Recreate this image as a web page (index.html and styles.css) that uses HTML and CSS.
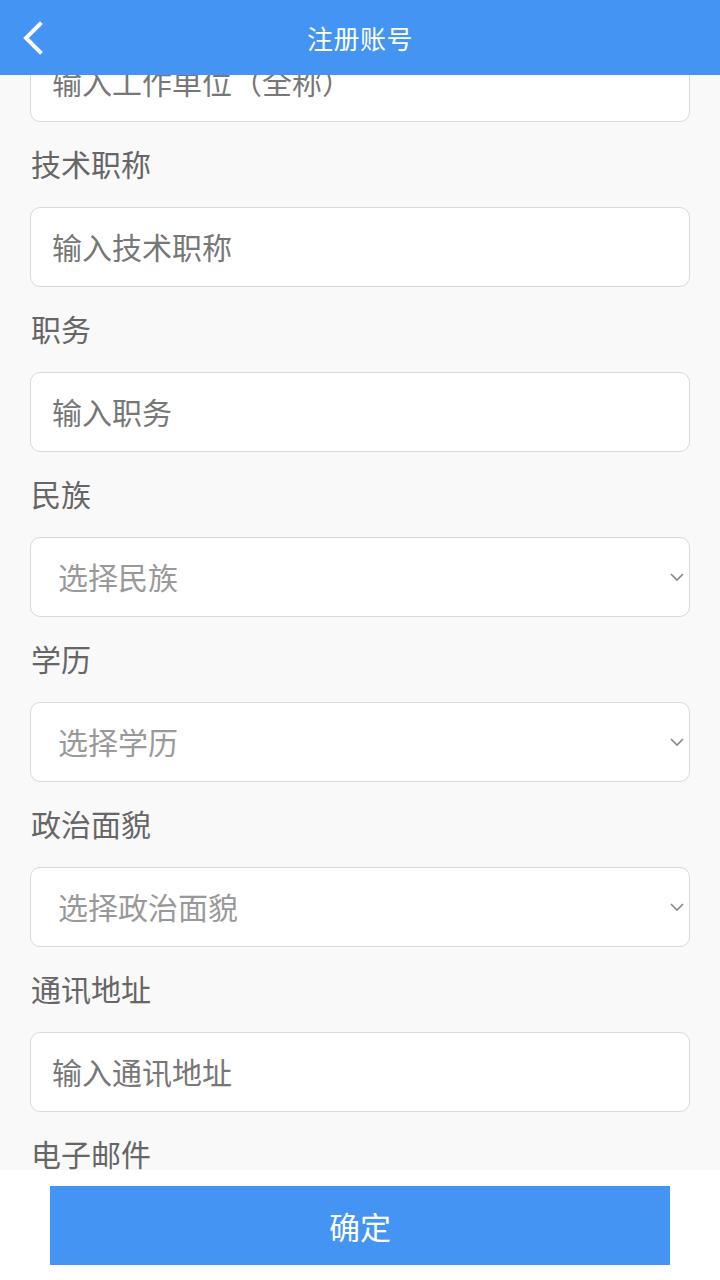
FILE: index.html
```html
<!DOCTYPE html>
<html lang="zh-CN">
<head>
  <meta charset="UTF-8"/>
  <meta name="viewport" content="width=device-width,initial-scale=1"/>
  <title>注册账号</title>
  <link rel="stylesheet" href="styles.css">
</head>
<body>

  <header class="topbar">
    <a class="back" href="#">
      <svg width="24" height="34" viewBox="0 0 24 34">
        <polyline points="19,3 5,17 19,31" fill="none" stroke="#fff" stroke-width="4" stroke-linecap="square" stroke-linejoin="miter"/>
      </svg>
    </a>
    <h1 class="title">注册账号</h1>
  </header>

  <main class="form-scroll">
    <form class="form">
      <input class="field-input first" type="text" placeholder="输入工作单位（全称）">

      <label class="field-label">技术职称</label>
      <input class="field-input" type="text" placeholder="输入技术职称">

      <label class="field-label">职务</label>
      <input class="field-input" type="text" placeholder="输入职务">

      <label class="field-label">民族</label>
      <div class="select-wrap">
        <select class="field-select"><option>选择民族</option></select>
        <svg class="select-arrow" width="14" height="9" viewBox="0 0 14 9"><polyline points="1,1 7,7 13,1" fill="none" stroke="#888" stroke-width="1.6"/></svg>
      </div>

      <label class="field-label">学历</label>
      <div class="select-wrap">
        <select class="field-select"><option>选择学历</option></select>
        <svg class="select-arrow" width="14" height="9" viewBox="0 0 14 9"><polyline points="1,1 7,7 13,1" fill="none" stroke="#888" stroke-width="1.6"/></svg>
      </div>

      <label class="field-label">政治面貌</label>
      <div class="select-wrap">
        <select class="field-select"><option>选择政治面貌</option></select>
        <svg class="select-arrow" width="14" height="9" viewBox="0 0 14 9"><polyline points="1,1 7,7 13,1" fill="none" stroke="#888" stroke-width="1.6"/></svg>
      </div>

      <label class="field-label">通讯地址</label>
      <input class="field-input" type="text" placeholder="输入通讯地址">

      <label class="field-label">电子邮件</label>
      <input class="field-input" type="text" placeholder="输入电子邮件">
    </form>
  </main>

  <footer class="actions">
    <button class="submit" type="button">确定</button>
  </footer>

</body>
</html>
```

FILE: styles.css
```css
* {
  box-sizing: border-box;
}

body {
  margin: 0;
  height: 1280px;
  display: flex;
  flex-direction: column;
  background: #f9f9f9;
  font-family: "Noto Sans CJK SC", "Noto Sans", sans-serif;
  overflow: hidden;
}

/* top bar */

.topbar {
  height: 75px;
  flex: none;
  background: #4394f3;
  display: flex;
  align-items: center;
  justify-content: center;
  position: relative;
  z-index: 2;
}

.back {
  position: absolute;
  left: 21px;
  top: 21px;
  display: block;
  line-height: 0;
}

.title {
  margin: 0;
  color: #fff;
  font-size: 26px;
  font-weight: normal;
  letter-spacing: 0.5px;
}

/* form */

.form-scroll {
  flex: 1;
  overflow: hidden;
}

.form {
  display: flex;
  flex-direction: column;
  padding: 0 30px;
}

.field-label {
  height: 85px;
  line-height: 83px;
  font-size: 30px;
  color: #666;
  padding-left: 1px;
}

.field-input,
.field-select {
  width: 100%;
  height: 80px;
  margin: 0;
  border: 1px solid #d9d9d9;
  border-radius: 10px;
  background: #fff;
  font-family: inherit;
  font-size: 30px;
  outline: none;
}

.field-input {
  padding: 0 21px 3px;
  color: #333;
}

.field-input.first {
  margin-top: -33px;
}

.field-input::placeholder {
  color: #777;
}

.select-wrap {
  position: relative;
}

.field-select {
  -webkit-appearance: none;
  appearance: none;
  padding: 0 40px 3px 27px;
  color: #999;
}

.select-arrow {
  position: absolute;
  right: 6px;
  top: 36px;
  pointer-events: none;
}

/* bottom */

.actions {
  height: 110px;
  flex: none;
  background: #fff;
  padding: 16px 50px 15px;
}

.submit {
  display: block;
  width: 100%;
  height: 79px;
  border: none;
  border-radius: 0;
  background: #4394f3;
  color: #fff;
  font-family: inherit;
  font-size: 31px;
  cursor: pointer;
}
```
